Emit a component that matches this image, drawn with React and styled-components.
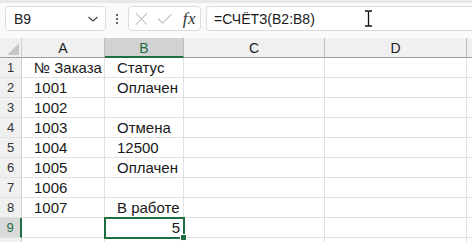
import styled, { createGlobalStyle } from "styled-components"

const GlobalStyle = createGlobalStyle`
  html, body {
    margin: 0;
    padding: 0;
    background: #ffffff;
    overflow: hidden;
  }
  body {
    font-family: "Liberation Sans", Arial, sans-serif;
  }
`

const COLS = ["A", "B", "C", "D", ""]
const ROWS = [
  ["№ Заказа", "Статус"],
  ["1001", "Оплачен"],
  ["1002", ""],
  ["1003", "Отмена"],
  ["1004", "12500"],
  ["1005", "Оплачен"],
  ["1006", ""],
  ["1007", "В работе"],
  ["", ""],
  ["", ""],
]

const App = () => {
  return (
    <Wrapper>
      <GlobalStyle />
      <Toolbar>
        <NameBox>
          <span>B9</span>
          <svg width="12" height="8" viewBox="0 0 12 8">
            <path d="M1.5 2 L6 6 L10.5 2" fill="none" stroke="#444" strokeWidth="1.2" />
          </svg>
        </NameBox>
        <Dots>
          <i />
          <i />
          <i />
        </Dots>
        <FxBox>
          <svg width="14" height="14" viewBox="0 0 14 14">
            <path d="M1 1 L13 13 M13 1 L1 13" stroke="#c4c4c4" strokeWidth="1.2" />
          </svg>
          <svg width="17" height="13" viewBox="0 0 17 13">
            <path d="M1 6.5 L6 11.5 L16 1.5" fill="none" stroke="#c4c4c4" strokeWidth="1.2" />
          </svg>
          <Fx>fx</Fx>
        </FxBox>
        <FormulaBox>
          <span>=СЧЁТЗ(B2:B8)</span>
          <Cursor width="9" height="17" viewBox="0 0 9 17">
            <path d="M1 1 H3.5 Q4.5 1 4.5 2 V15 Q4.5 16 3.5 16 H1 M8 1 H5.5 Q4.5 1 4.5 2 M4.5 15 Q4.5 16 5.5 16 H8" fill="none" stroke="#111" strokeWidth="1.3" />
          </Cursor>
        </FormulaBox>
      </Toolbar>
      <Sheet>
        <Corner>
          <svg width="12" height="12" viewBox="0 0 12 12">
            <path d="M12 0 L12 12 L0 12 Z" fill="#c7c7c7" />
          </svg>
        </Corner>
        {COLS.map((c, i) => (
          <ColHead key={i} $active={c === "B"}>{c}</ColHead>
        ))}
        {ROWS.map((r, i) => (
          <Row key={i} num={i + 1} data={r} />
        ))}
      </Sheet>
    </Wrapper>
  )
}

const Row = ({ num, data }) => {
  const active = num === 9
  return (
    <>
      {/* row 10 is only a sliver in the shot, its number is out of view */}
      <RowHead $active={active}>{num < 10 ? num : ""}</RowHead>
      <Cell>{data[0]}</Cell>
      <Cell $selected={active} $right={active}>
        {active ? "5" : data[1]}
        {active && <Handle />}
      </Cell>
      <Cell />
      <Cell />
      <Cell />
    </>
  )
}

const Wrapper = styled.div`
  width: 472px;
  height: 242px;
  overflow: hidden;
  background: #fff;
  border-top: 3px solid #e8e8e8;
  box-sizing: border-box;
`

const Toolbar = styled.div`
  height: 35px;
  display: flex;
  align-items: flex-start;
  padding: 3px 0 0 5px;
  box-sizing: border-box;
  background: #fafafa;
`

const Box = styled.div`
  height: 25px;
  box-sizing: border-box;
  background: #fff;
  border: 1px solid #dcdcdc;
  border-radius: 4px;
  display: flex;
  align-items: center;
`

const NameBox = styled(Box)`
  width: 101px;
  padding: 0 6px 0 8px;
  justify-content: space-between;
  font-size: 14px;
  color: #1a1a1a;
`

const Dots = styled.div`
  width: 22px;
  height: 25px;
  display: flex;
  flex-direction: column;
  align-items: center;
  justify-content: center;
  gap: 2px;
  i {
    width: 2px;
    height: 2px;
    background: #333;
    border-radius: 1px;
  }
`

const FxBox = styled(Box)`
  width: 73px;
  padding: 0 4px 0 6px;
  gap: 9px;
`

const Fx = styled.span`
  font-family: "Liberation Serif", "Times New Roman", serif;
  font-style: italic;
  font-size: 17px;
  color: #333;
  margin-left: 1px;
  letter-spacing: 0.5px;
`

const FormulaBox = styled(Box)`
  flex: 1;
  margin-left: 5px;
  padding-left: 7px;
  border-right: none;
  border-radius: 4px 0 0 4px;
  font-size: 14px;
  color: #1a1a1a;
  position: relative;
`

const Cursor = styled.svg`
  position: absolute;
  left: 157px;
  top: 3px;
`

const Sheet = styled.div`
  display: grid;
  grid-template-columns: 22px 83px 79px 141px 142px 1fr;
  grid-auto-rows: 20px;
`

const Corner = styled.div`
  background: #f0f0f0;
  border-right: 1px solid #cfcfcf;
  border-bottom: 1px solid #9e9e9e;
  display: flex;
  align-items: flex-end;
  justify-content: flex-end;
  padding: 0 2px 2px 0;
  box-sizing: border-box;
`

const ColHead = styled.div`
  background: ${(p) => (p.$active ? "#d2d2d2" : "#f0f0f0")};
  color: ${(p) => (p.$active ? "#1e6e42" : "#222")};
  border-right: 1px solid #bdbdbd;
  border-bottom: ${(p) => (p.$active ? "2px solid #1e6e42" : "1px solid #9e9e9e")};
  box-sizing: border-box;
  font-size: 14px;
  display: flex;
  align-items: center;
  justify-content: center;
  padding-top: 1px;
`

const RowHead = styled.div`
  background: ${(p) => (p.$active ? "#d9d9d9" : "#f0f0f0")};
  color: ${(p) => (p.$active ? "#1e6e42" : "#333")};
  border-right: ${(p) => (p.$active ? "2px solid #1e6e42" : "1px solid #cfcfcf")};
  border-bottom: 1px solid #e1e1e1;
  box-sizing: border-box;
  font-size: 13px;
  display: flex;
  align-items: center;
  justify-content: center;
`

const Cell = styled.div`
  position: relative;
  border-right: 1px solid #e1e1e1;
  border-bottom: 1px solid #e1e1e1;
  box-sizing: border-box;
  font-size: 15px;
  color: #1a1a1a;
  display: flex;
  align-items: center;
  justify-content: ${(p) => (p.$right ? "flex-end" : "flex-start")};
  padding: ${(p) => (p.$right ? "0 3px 0 0" : "0 0 0 12px")};
  white-space: nowrap;
  ${(p) =>
    p.$selected &&
    `
    outline: 2px solid #1e6e42;
    outline-offset: -1px;
    z-index: 1;
  `}
`

const Handle = styled.span`
  position: absolute;
  right: -4px;
  bottom: -4px;
  width: 5px;
  height: 5px;
  background: #1e6e42;
  border: 1px solid #fff;
`

export default App
